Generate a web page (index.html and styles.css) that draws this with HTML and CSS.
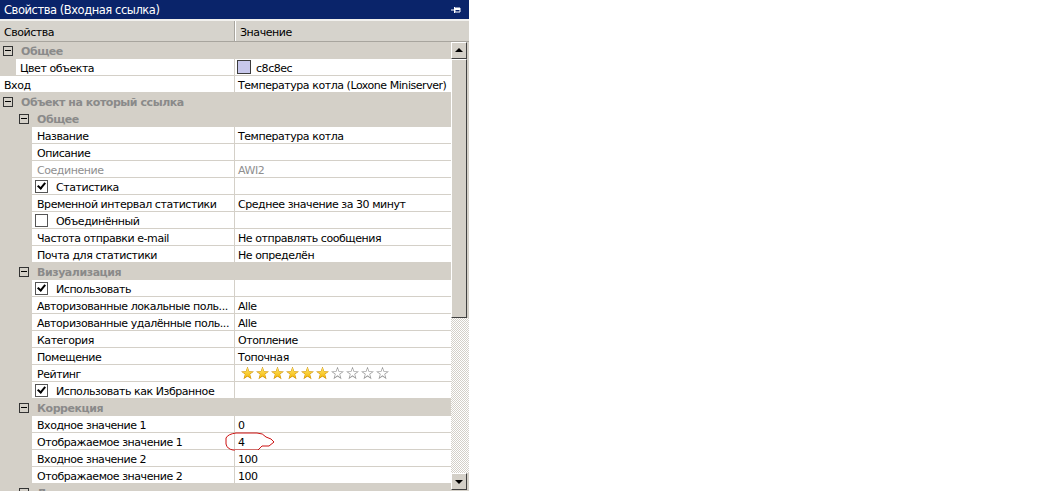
FILE: index.html
```html
<!DOCTYPE html>
<html>
<head>
    <title>Свойства (Входная ссылка)</title>
    <link rel="stylesheet" href="styles.css">
</head>
<body>
    <div class="panel">
        <div class="titlebar">
            <span>Свойства (Входная ссылка)</span>
            <svg class="pin" width="10" height="8" viewBox="0 0 10 8">
                <path d="M0 4h3M3.5 1v6M4 2h5v4H4z" stroke="#fff" fill="none"/>
                <rect x="4" y="2" width="5" height="2" fill="#fff"/>
            </svg>
        </div>
        <div class="header">
            <div class="hcol hname">Свойства</div>
            <div class="hcol">Значение</div>
        </div>

        <div class="body">
            <div class="grid">
                <div class="cat"><span class="tog"></span>Общее</div>
                <div class="row l1"><div class="name">Цвет объекта</div><div class="value"><span class="swatch"></span>c8c8ec</div></div>
                <div class="row"><div class="name">Вход</div><div class="value">Температура котла (Loxone Miniserver)</div></div>
                <div class="cat"><span class="tog"></span>Объект на который ссылка</div>
                <div class="cat l2"><span class="tog"></span>Общее</div>
                <div class="row l2"><div class="name">Название</div><div class="value">Температура котла</div></div>
                <div class="row l2"><div class="name">Описание</div><div class="value"></div></div>
                <div class="row l2 off"><div class="name">Соединение</div><div class="value">AWI2</div></div>
                <div class="row l2"><div class="name"><span class="check on"></span>Статистика</div><div class="value"></div></div>
                <div class="row l2"><div class="name">Временной интервал статистики</div><div class="value">Среднее значение за 30 минут</div></div>
                <div class="row l2"><div class="name"><span class="check"></span>Объединённый</div><div class="value"></div></div>
                <div class="row l2"><div class="name">Частота отправки e-mail</div><div class="value">Не отправлять сообщения</div></div>
                <div class="row l2"><div class="name">Почта для статистики</div><div class="value">Не определён</div></div>
                <div class="cat l2"><span class="tog"></span>Визуализация</div>
                <div class="row l2"><div class="name"><span class="check on"></span>Использовать</div><div class="value"></div></div>
                <div class="row l2"><div class="name">Авторизованные локальные поль...</div><div class="value">Alle</div></div>
                <div class="row l2"><div class="name">Авторизованные удалённые поль...</div><div class="value">Alle</div></div>
                <div class="row l2"><div class="name">Категория</div><div class="value">Отопление</div></div>
                <div class="row l2"><div class="name">Помещение</div><div class="value">Топочная</div></div>
                <div class="row l2"><div class="name">Рейтинг</div><div class="value stars">
                    <span class="star full"></span><span class="star full"></span><span class="star full"></span><span class="star full"></span><span class="star full"></span><span class="star full"></span><span class="star"></span><span class="star"></span><span class="star"></span><span class="star"></span>
                </div></div>
                <div class="row l2"><div class="name"><span class="check on"></span>Использовать как Избранное</div><div class="value"></div></div>
                <div class="cat l2"><span class="tog"></span>Коррекция</div>
                <div class="row l2"><div class="name">Входное значение 1</div><div class="value">0</div></div>
                <div class="row l2"><div class="name">Отображаемое значение 1</div><div class="value marked">4
                    <svg class="scribble" width="54" height="22" viewBox="0 0 54 22">
                        <path d="M11 2 L32 2 Q38 2 41 6 L46 8 L49 11 L44 15 L37 15 L33 19 L8 19 Q2 18 1 13 L1 7 Q3 3 11 2 Z" fill="none" stroke="#cc1111" stroke-width="1"/>
                    </svg>
                </div></div>
                <div class="row l2"><div class="name">Входное значение 2</div><div class="value">100</div></div>
                <div class="row l2"><div class="name">Отображаемое значение 2</div><div class="value">100</div></div>
                <div class="cat l2"><span class="tog"></span>Дополнительно</div>
            </div>

            <div class="scrollbar">
                <div class="sbtn up"></div>
                <div class="thumb"></div>
                <div class="track"></div>
                <div class="sbtn down"></div>
            </div>
        </div>
    </div>
</body>
</html>
```

FILE: styles.css
```css
body {
    margin: 0;
    background: #fff;
    font-family: "DejaVu Sans", Tahoma, sans-serif;
    font-size: 11px;
    letter-spacing: -0.45px;
    color: #000;
}
.panel {
    width: 469px;
    height: 491px;
    overflow: hidden;
    background: #d4d0c8;
}
.titlebar {
    height: 19px;
    background: #0a246a;
    color: #fff;
    font-size: 11.5px;
    line-height: 20px;
    padding-left: 4px;
    display: flex;
    justify-content: space-between;
    align-items: center;
    border-bottom: 2px solid #f2f1ee;
}
.pin {
    margin-right: 8px;
}
.header {
    height: 20px;
    display: flex;
    background: #d6d3cc;
    border-bottom: 1px solid #a8a59e;
}
.hcol {
    padding-left: 4px;
    line-height: 23px;
}
.hname {
    width: 230px;
    border-right: 1px solid #a8a59e;
    box-shadow: 1px 0 0 #fff;
    margin-right: 1px;
}
.body {
    display: flex;
    height: 449px;
}
.grid {
    width: 451px;
    overflow: hidden;
}
.row {
    display: flex;
    height: 16px;
    border-bottom: 1px solid #d4d0c8;
    background: #d4d0c8;
}
.name,
.value {
    box-sizing: border-box;
    height: 16px;
    padding-top: 2px;
    background: #fff;
    white-space: nowrap;
    display: flex;
    align-items: center;
}
.name {
    flex: none;
    width: 235px;
    padding-left: 4px;
    border-right: 1px solid #d4d0c8;
    overflow: hidden;
}
.l1 .name {
    margin-left: 16px;
    width: 219px;
}
.l2 .name {
    margin-left: 32px;
    width: 203px;
    padding-left: 5px;
}
.value {
    flex: 1;
    padding-left: 3px;
    position: relative;
}
.off .name,
.off .value {
    color: #8f8f8f;
}
.swatch {
    width: 12px;
    height: 12px;
    margin-top: -2px;
    margin-left: -1px;
    background: #c8c8ec;
    border: 1px solid #3c3c3c;
    margin-right: 5px;
}
.check {
    width: 11px;
    height: 11px;
    margin-top: -2px;
    border: 1px solid #555;
    background: #fff;
    margin-left: -2px;
    margin-right: 8px;
    flex: none;
    position: relative;
}
.check.on::after {
    content: "";
    position: absolute;
    left: 3px;
    top: 0px;
    width: 3px;
    height: 6px;
    border: solid #000;
    border-width: 0 2px 2px 0;
    transform: rotate(40deg);
}
.cat {
    box-sizing: border-box;
    height: 17px;
    padding-top: 2px;
    background: #d4d0c8;
    color: #8a8a8a;
    font-weight: bold;
    display: flex;
    align-items: center;
    padding-left: 3px;
    white-space: nowrap;
}
.cat.l2 {
    padding-left: 19px;
}
.tog {
    width: 8px;
    height: 8px;
    margin-top: -2px;
    border: 1px solid #333;
    margin-right: 8px;
    position: relative;
    flex: none;
}
.tog::after {
    content: "";
    position: absolute;
    left: 1px;
    top: 3px;
    width: 6px;
    height: 1px;
    background: #000;
}
.stars {
    padding-left: 6px;
    gap: 2px;
}
.star {
    width: 13px;
    height: 13px;
    margin-top: -2px;
    background: #9b9b9b;
    clip-path: polygon(50% 0%, 63% 36%, 100% 38%, 70% 60%, 81% 98%, 50% 76%, 19% 98%, 30% 60%, 0% 38%, 37% 36%);
    position: relative;
}
.star::after {
    content: "";
    position: absolute;
    inset: 2px;
    background: #fff;
    clip-path: inherit;
}
.star.full {
    background: #c98a00;
}
.star.full::after {
    inset: 1px;
    background: linear-gradient(#ffe566, #f3b400);
}
.scribble {
    position: absolute;
    left: -10px;
    top: -2px;
}
.scrollbar {
    width: 18px;
    display: flex;
    flex-direction: column;
}
.sbtn {
    height: 15px;
    width: 14px;
    background: #d4d0c8;
    border: 1px solid;
    border-color: #fff #404040 #404040 #fff;
    position: relative;
}
.sbtn::after {
    content: "";
    position: absolute;
    left: 3px;
    top: 5px;
    border-left: 4px solid transparent;
    border-right: 4px solid transparent;
}
.up::after {
    border-bottom: 4px solid #000;
}
.down::after {
    top: 6px;
    border-top: 4px solid #000;
}
.thumb {
    height: 257px;
    width: 14px;
    background: #d4d0c8;
    border: 1px solid;
    border-color: #fff #404040 #404040 #fff;
}
.track {
    flex: 1;
    background: repeating-conic-gradient(#d4d0c8 0 25%, #fff 0 50%) 0 0 / 2px 2px;
}
.down {
    margin-bottom: 1px;
}
```
